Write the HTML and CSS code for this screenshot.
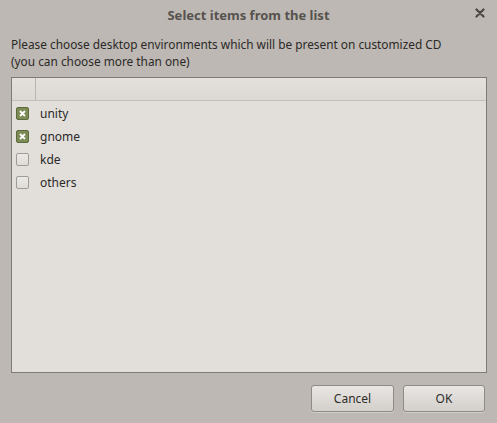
FILE: index.html
```html
<!DOCTYPE html>
<html>
<head>
<meta charset="utf-8">
<link rel="stylesheet" href="styles.css">
</head>
<body>
<div class="dialog">
  <div class="titlebar">
    <span class="title">Select items from the list</span>
    <span class="close">
      <svg width="10" height="10" viewBox="0 0 10 10"><path d="M1.5 1.5 L8.5 8.5 M8.5 1.5 L1.5 8.5" stroke="#4a4744" stroke-width="2.2" stroke-linecap="round"/></svg>
    </span>
  </div>
  <div class="content">
    <p class="label">Please choose desktop environments which will be present on customized CD<br>(you can choose more than one)</p>
    <div class="list">
      <div class="header">
        <div class="hcell check-col"></div>
        <div class="hcell name-col"></div>
      </div>
      <div class="rows">
        <div class="row"><span class="cb checked"><svg width="7" height="7" viewBox="0 0 7 7"><path d="M1 1 L6 6 M6 1 L1 6" stroke="#fff" stroke-width="1.8"/></svg></span><span class="item">unity</span></div>
        <div class="row"><span class="cb checked"><svg width="7" height="7" viewBox="0 0 7 7"><path d="M1 1 L6 6 M6 1 L1 6" stroke="#fff" stroke-width="1.8"/></svg></span><span class="item">gnome</span></div>
        <div class="row"><span class="cb"></span><span class="item">kde</span></div>
        <div class="row"><span class="cb"></span><span class="item">others</span></div>
      </div>
    </div>
    <div class="buttons">
      <button class="btn btn-cancel">Cancel</button>
      <button class="btn btn-ok">OK</button>
    </div>
  </div>
</div>
</body>
</html>
```
FILE: styles.css
```css
html, body {
  margin: 0;
  padding: 0;
}
body {
  width: 497px;
  height: 423px;
  background: #bcb7b2;
  font-family: "Noto Sans", "Open Sans", sans-serif;
  color: #2e2c2a;
  overflow: hidden;
}
.dialog {
  width: 497px;
  height: 423px;
  display: flex;
  flex-direction: column;
  background: #bdb8b3;
}
.titlebar {
  height: 29px;
  display: flex;
  align-items: center;
  justify-content: center;
  position: relative;
}
.title {
  font-weight: bold;
  font-size: 13px;
  color: #56524e;
}
.close {
  position: absolute;
  right: 12px;
  top: 8px;
  width: 10px;
  height: 10px;
  display: flex;
}
.content {
  flex: 1;
  display: flex;
  flex-direction: column;
  padding: 7px 10px 11px 11px;
}
.label {
  margin: 0 0 7px 0;
  font-size: 11.85px;
  line-height: 17px;
  color: #2b2927;
}
.list {
  height: 296px;
  border: 1px solid #7f7b77;
  background: #e2dfdb;
  display: flex;
  flex-direction: column;
  box-sizing: border-box;
}
.header {
  height: 23px;
  display: flex;
  background: linear-gradient(#e4e1dd, #dcd8d4);
  border-bottom: 1px solid #c3bfbb;
  box-sizing: border-box;
}
.hcell {
  height: 100%;
  box-sizing: border-box;
}
.check-col {
  width: 24px;
  border-right: 1px solid #b9b5b1;
}
.name-col {
  flex: 1;
}
.rows {
  padding-top: 1px;
  display: flex;
  flex-direction: column;
}
.row {
  height: 23px;
  display: flex;
  align-items: center;
  padding-left: 4px;
}
.cb {
  width: 13px;
  height: 13px;
  box-sizing: border-box;
  border: 1px solid #9f9b97;
  border-radius: 2px;
  background: linear-gradient(#eceae7, #dedbd7);
  display: flex;
  align-items: center;
  justify-content: center;
}
.cb.checked {
  background: #7c8a55;
  border-color: #5d6a3c;
}
.item {
  margin-left: 11px;
  font-size: 12px;
  color: #2b2927;
}
.buttons {
  margin-top: 12px;
  padding-right: 2px;
  display: flex;
  justify-content: flex-end;
  gap: 9px;
}
.btn {
  height: 27px;
  font-family: "Noto Sans", "Open Sans", sans-serif;
  font-size: 12px;
  color: #2e2c2a;
  border: 1px solid #8e8a86;
  border-radius: 3px;
  background: linear-gradient(#e9e6e3, #d3cfcb);
  box-shadow: 0 1px 0 rgba(255,255,255,0.3);
  padding: 0;
}
.btn-cancel {
  width: 83px;
}
.btn-ok {
  width: 82px;
}
```
